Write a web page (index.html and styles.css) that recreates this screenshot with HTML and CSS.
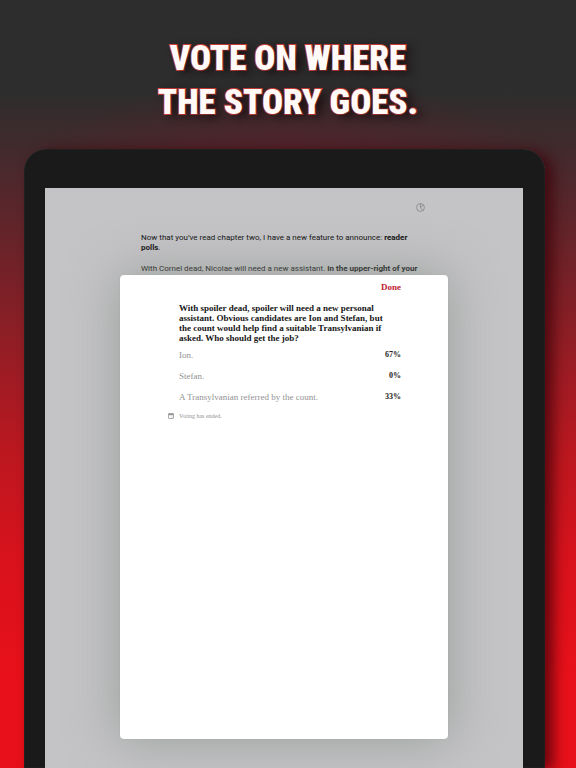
FILE: index.html
```html
<!DOCTYPE html>
<html lang="en">
<head>
<meta charset="utf-8">
<meta name="viewport" content="width=device-width, initial-scale=1">
<title>Vote on where the story goes</title>
<link rel="stylesheet" href="styles.css">
</head>
<body>
<main class="promo">
  <h1 class="headline">VOTE ON WHERE<br>THE STORY GOES.</h1>
  <div class="tablet">
    <div class="screen">
      <article class="chapter">
        <header class="toolbar">
          <button class="history" type="button" aria-label="Polls">
            <svg viewBox="0 0 16 16" width="9" height="9" fill="none" stroke="currentColor" stroke-width="1.4">
              <circle cx="8" cy="8" r="7"/>
              <path d="M8 1v7l5-4M8 8l4 5"/>
            </svg>
          </button>
        </header>
        <p>Now that you’ve read chapter two, I have a new feature to announce: <b>reader polls</b>.</p>
        <p>With Cornel dead, Nicolae will need a new assistant. <b>In the upper-right of your</b></p>
      </article>
      <section class="sheet" role="dialog" aria-labelledby="question">
        <div class="actions"><button class="done" type="button">Done</button></div>
        <h2 class="question" id="question">With spoiler dead, spoiler will need a new personal assistant. Obvious candidates are Ion and Stefan, but the count would help find a suitable Transylvanian if asked. Who should get the job?</h2>
        <dl class="results">
          <div class="result"><dt>Ion.</dt><dd>67%</dd></div>
          <div class="result"><dt>Stefan.</dt><dd>0%</dd></div>
          <div class="result"><dt>A Transylvanian referred by the count.</dt><dd>33%</dd></div>
        </dl>
        <p class="status">
          <svg viewBox="0 0 12 12" width="6" height="6" fill="none" stroke="currentColor" stroke-width="1.5">
            <rect x="1" y="1" width="10" height="10" rx="1"/>
            <path d="M1 3h10" stroke-width="3"/>
            <path d="M7 8h2"/>
          </svg>
          Voting has ended.
        </p>
      </section>
    </div>
  </div>
</main>
</body>
</html>
```
FILE: styles.css
```css
* {
  box-sizing: border-box;
  margin: 0;
}

body {
  background: #e8101a;
}

button {
  padding: 0;
  border: 0;
  background: none;
  font: inherit;
}

.promo {
  display: flex;
  flex-direction: column;
  min-height: 100vh;
  padding-top: 37px;
  overflow: hidden;
  background:
    radial-gradient(ellipse 260px 90px at 50% 170px, #70182870, #70182800),
    linear-gradient(#2d2d2d 0, #2d2d2d 90px, #422a2d 150px, #5a262b 210px, #7c2027 290px, #9c1c24 370px, #be171f 460px, #d8121c 560px, #e8101a 680px);
}

.headline {
  color: #fffaf8;
  font: 900 35px/44px "Roboto Condensed", "Liberation Sans", sans-serif;
  text-align: center;
  -webkit-text-stroke: 2px #e0443c;
  paint-order: stroke fill;
  text-shadow: 6px 3px 10px #180c0e;
}

.tablet {
  display: flex;
  flex: 1;
  margin: 24px 31px 0 24px;
  padding: 39px 22px 0 21px;
  border-radius: 22px 22px 0 0;
  background: #1a1a1b;
  box-shadow: inset 0 0 1px #505050, 8px 2px 14px #3c0008c0;
}

.screen {
  display: grid;
  flex: 1;
  grid-template-columns: 1fr;
  overflow: hidden;
  background: #c4c3c6;
}

.chapter,
.sheet {
  grid-area: 1 / 1;
}

.chapter {
  padding: 15px 96px 0;
  color: #111;
  font: 8px/10px Roboto, sans-serif;
}

.toolbar {
  display: flex;
  justify-content: flex-end;
  height: 30px;
  padding-right: 2px;
}

.history {
  display: flex;
  height: 9px;
  color: #858588;
}

.chapter p {
  margin-bottom: 11px;
}

.sheet {
  margin: 87px 75px 29px;
  padding: 7px 47px 7px 48px;
  border-radius: 4px;
  background: #fff;
  box-shadow: 0 0 1px #8f9690, 0 0 50px #8a948cc0;
  font: 9px/10px "Liberation Serif", serif;
}

.actions {
  display: flex;
  justify-content: flex-end;
}

.done {
  color: #c0202f;
  font-weight: bold;
}

.question {
  margin: 11px 8px 7px 11px;
  color: #161616;
  font-size: 9px;
}

.results {
  display: grid;
  gap: 11px;
  margin-left: 11px;
}

.result {
  display: flex;
  justify-content: space-between;
}

.result dt {
  color: #929292;
}

.result dd {
  color: #222;
  font-size: 8px;
  font-weight: bold;
}

.status {
  display: flex;
  align-items: center;
  gap: 5px;
  margin-top: 9px;
  color: #929292;
  font-size: 6px;
}
```
